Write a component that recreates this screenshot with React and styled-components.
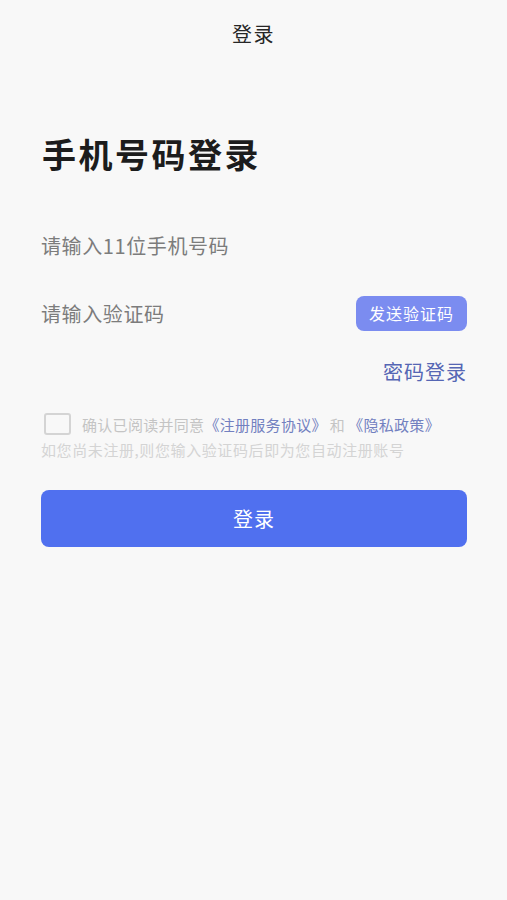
import React, { useState } from "react";
import styled, { createGlobalStyle } from "styled-components";

const GlobalStyle = createGlobalStyle`
  html, body {
    margin: 0;
    padding: 0;
    background: #f8f8f8;
  }
  body {
    font-family: "Noto Sans CJK SC", "Noto Sans", sans-serif;
  }
  * {
    box-sizing: border-box;
  }
`;

function App() {
  const [phone, setPhone] = useState("");
  const [code, setCode] = useState("");
  const [agreed, setAgreed] = useState(false);

  return (
    <Page>
      <GlobalStyle />
      <Header>登录</Header>
      <Body>
        <Title>手机号码登录</Title>
        <FieldRow>
          <Input
            type="tel"
            value={phone}
            onChange={(e) => setPhone(e.target.value)}
            placeholder="请输入11位手机号码"
          />
        </FieldRow>
        <FieldRow>
          <Input
            type="text"
            value={code}
            onChange={(e) => setCode(e.target.value)}
            placeholder="请输入验证码"
          />
          <SendButton>发送验证码</SendButton>
        </FieldRow>
        <SwitchRow>
          <SwitchLink>密码登录</SwitchLink>
        </SwitchRow>
        <AgreeRow>
          <CheckBox checked={agreed} onClick={() => setAgreed(!agreed)} />
          <AgreeText>
            确认已阅读并同意<Link>《注册服务协议》</Link>
            <And>和</And>
            <Link>《隐私政策》</Link>
          </AgreeText>
        </AgreeRow>
        <Hint>如您尚未注册,则您输入验证码后即为您自动注册账号</Hint>
        <LoginButton>登录</LoginButton>
      </Body>
    </Page>
  );
}

export default App;

const Page = styled.div`
  min-height: 900px;
  background: #f8f8f8;
`;

const Header = styled.div`
  height: 68px;
  line-height: 68px;
  text-align: center;
  font-size: 20px;
  letter-spacing: 1.5px;
  color: #262626;
`;

const Body = styled.div`
  display: flex;
  flex-direction: column;
  padding: 0 40px 0 41px;
`;

const Title = styled.h1`
  margin: 64px 0 0 1px;
  font-size: 34px;
  line-height: 44px;
  font-weight: 700;
  letter-spacing: 2.5px;
  color: #1c1c1c;
`;

const FieldRow = styled.div`
  display: flex;
  align-items: center;
  justify-content: space-between;
  height: 68px;
  &:first-of-type {
    margin-top: 35px;
  }
`;

const Input = styled.input`
  flex: 1;
  min-width: 0;
  border: none;
  outline: none;
  background: transparent;
  padding: 0;
  font-family: inherit;
  font-size: 20px;
  letter-spacing: 0.6px;
  color: #333;
  &::placeholder {
    color: #7c7c7c;
  }
`;

const SendButton = styled.button`
  width: 111px;
  height: 35px;
  border: none;
  border-radius: 8px;
  background: #7b8cf0;
  color: #fff;
  font-family: inherit;
  font-size: 16px;
  letter-spacing: 1px;
  padding: 0;
  cursor: pointer;
`;

const SwitchRow = styled.div`
  display: flex;
  justify-content: flex-end;
  margin-top: 11px;
`;

const SwitchLink = styled.span`
  font-size: 20px;
  line-height: 28px;
  letter-spacing: 1px;
  color: #5566b4;
  cursor: pointer;
`;

const AgreeRow = styled.div`
  display: flex;
  align-items: center;
  gap: 11px;
  height: 24px;
  margin-top: 26px;
  padding-left: 3px;
`;

const CheckBox = styled.div`
  width: 27px;
  height: 22px;
  border: 2px solid #d4d4d4;
  border-radius: 3px;
  background: ${(p) => (p.checked ? "#5070ef" : "transparent")};
  cursor: pointer;
`;

const AgreeText = styled.span`
  font-size: 15px;
  letter-spacing: 0.3px;
  color: #c4c4c4;
`;

const Link = styled.span`
  color: #7280c0;
`;

const And = styled.span`
  margin: 0 3px;
`;

const Hint = styled.div`
  margin-top: 3px;
  font-size: 15px;
  line-height: 22px;
  letter-spacing: 0.6px;
  color: #d4d4d4;
`;

const LoginButton = styled.button`
  margin-top: 29px;
  height: 57px;
  border: none;
  border-radius: 8px;
  background: #5070ef;
  color: #fff;
  font-family: inherit;
  font-size: 20px;
  letter-spacing: 1px;
  cursor: pointer;
`;
